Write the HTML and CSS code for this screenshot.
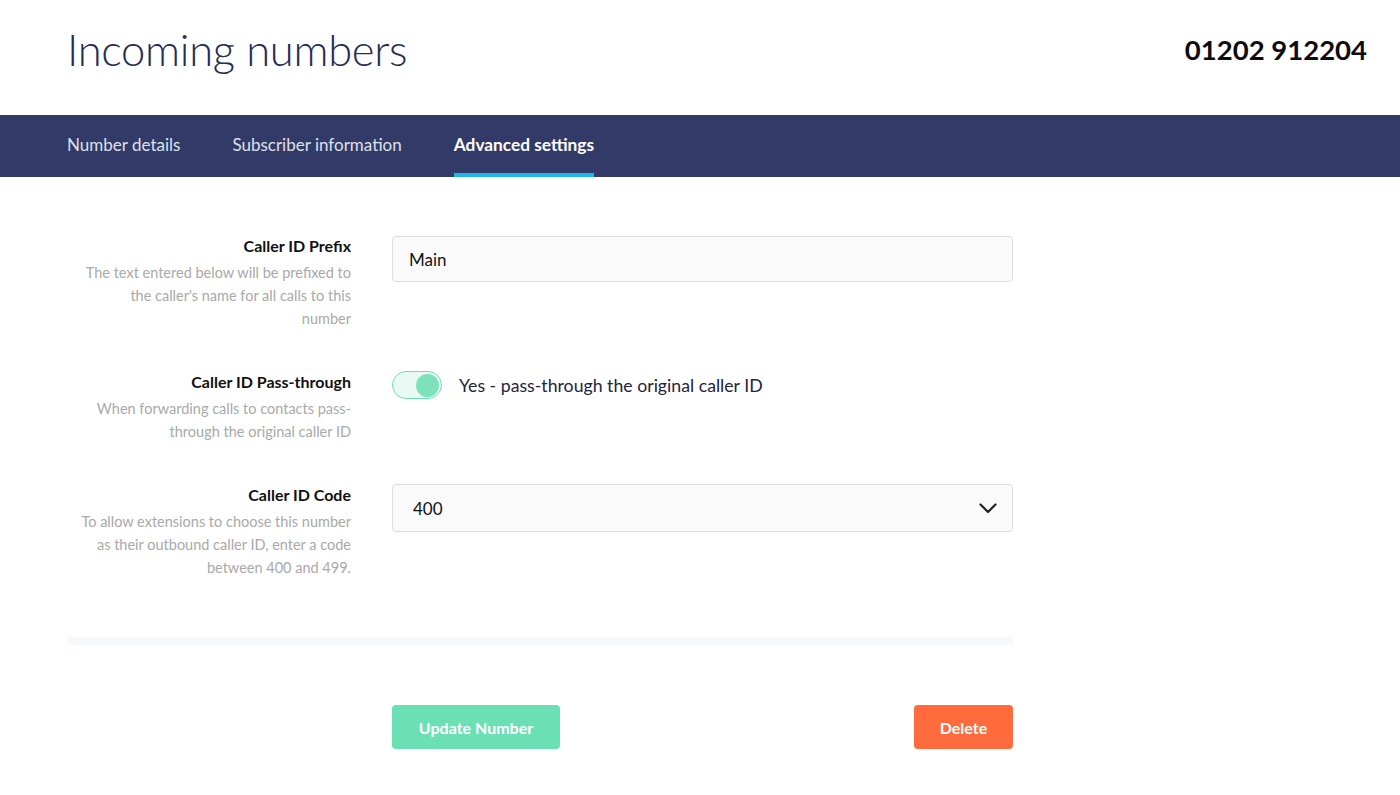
FILE: index.html
```html
<!DOCTYPE html>
<html lang="en">
<head>
<meta charset="utf-8">
<title>Incoming numbers</title>
<link rel="stylesheet" href="styles.css">
</head>
<body>
<header class="header">
  <h1 class="title">Incoming numbers</h1>
  <div class="phone">01202 912204</div>
</header>
<nav class="tabs">
  <a class="tab">Number details</a>
  <a class="tab">Subscriber information</a>
  <a class="tab active">Advanced settings</a>
</nav>
<main class="content">
  <div class="form">
    <div class="label-col">
      <div class="label">Caller ID Prefix</div>
      <div class="desc">The text entered below will be prefixed to the caller's name for all calls to this number</div>
    </div>
    <div class="field-col">
      <div class="input">Main</div>
    </div>

    <div class="label-col">
      <div class="label">Caller ID Pass-through</div>
      <div class="desc">When forwarding calls to contacts pass-through the original caller ID</div>
    </div>
    <div class="field-col toggle-row">
      <span class="toggle"><span class="knob"></span></span>
      <span class="toggle-text">Yes - pass-through the original caller ID</span>
    </div>

    <div class="label-col">
      <div class="label">Caller ID Code</div>
      <div class="desc">To allow extensions to choose this number as their outbound caller ID, enter a code between 400 and 499.</div>
    </div>
    <div class="field-col">
      <div class="select">
        <span>400</span>
        <svg class="chev" width="18" height="11" viewBox="0 0 18 11"><path d="M1.5 1.5 L9 9 L16.5 1.5" fill="none" stroke="#222" stroke-width="2.2" stroke-linecap="round" stroke-linejoin="round"/></svg>
      </div>
    </div>
  </div>
  <div class="divider"></div>
  <div class="actions">
    <button class="btn btn-update">Update Number</button>
    <button class="btn btn-delete">Delete</button>
  </div>
</main>
</body>
</html>
```

FILE: styles.css
```css
* { box-sizing: border-box; }
html, body { margin: 0; padding: 0; background: #ffffff; }
body {
  font-family: Lato, "Noto Sans", "Liberation Sans", sans-serif;
  color: #1e2340;
}
.header {
  height: 115px;
  display: flex;
  align-items: center;
  justify-content: space-between;
  padding: 0 33px 0 67px;
}
.title {
  margin: 0;
  font-size: 43.5px;
  font-weight: 300;
  color: #262c55;
  letter-spacing: -0.3px;
  padding-bottom: 18px;
}
.phone {
  font-size: 27.5px;
  font-weight: 700;
  color: #0d0d0d;
  padding-bottom: 16px;
}
.tabs {
  height: 62px;
  background: #323a68;
  display: flex;
  gap: 52px;
  padding-left: 67px;
}
.tab {
  display: flex;
  align-items: center;
  font-size: 17px;
  color: #dfe1ea;
  border-bottom: 4px solid transparent;
}
.tab.active {
  color: #ffffff;
  font-weight: 700;
  font-size: 17.3px;
  border-bottom-color: #1fb4ea;
}
.content {
  padding: 59px 0 0 67px;
  width: 1013px;
}
.form {
  display: grid;
  grid-template-columns: 284px 621px;
  column-gap: 41px;
  row-gap: 42px;
}
.label-col {
  text-align: right;
  padding-left: 12px;
}
.label {
  font-size: 16px;
  font-weight: 700;
  color: #111111;
  line-height: 20px;
}
.desc {
  font-size: 14.5px;
  color: #a9a9a9;
  line-height: 23px;
  margin-top: 5px;
}
.input, .select {
  height: 46px;
  background: #fafafa;
  border: 1px solid #dcdcdc;
  border-radius: 4px;
  font-size: 17px;
  color: #111;
  display: flex;
  align-items: center;
  padding: 0 16px;
}
.select {
  height: 48px;
  margin-top: -1px;
  justify-content: space-between;
  padding: 0 15px 0 20px;
}
.field-col { align-self: start; }
.toggle-row {
  display: flex;
  align-items: center;
  gap: 17px;
  margin-top: -1px;
}
.toggle {
  width: 50px;
  height: 28px;
  border-radius: 14px;
  background: #e8faf3;
  border: 1.5px solid #6fdfb6;
  display: flex;
  align-items: center;
  justify-content: flex-end;
  padding-right: 2px;
}
.knob {
  width: 23px;
  height: 23px;
  border-radius: 50%;
  background: #7de2bc;
}
.toggle-text {
  font-size: 17.7px;
  color: #1e2340;
}
.divider {
  height: 8px;
  background: #f7f8fb;
  margin-top: 58px;
}
.actions {
  margin-left: 325px;
  margin-top: 60px;
  display: flex;
  justify-content: space-between;
}
.btn {
  height: 44px;
  border: none;
  border-radius: 4px;
  color: #ffffff;
  font-family: inherit;
  font-size: 16px;
  font-weight: 700;
}
.btn-update { width: 168px; background: #6ce0b5; }
.btn-delete { width: 99px; background: #ff6b3d; }
```
